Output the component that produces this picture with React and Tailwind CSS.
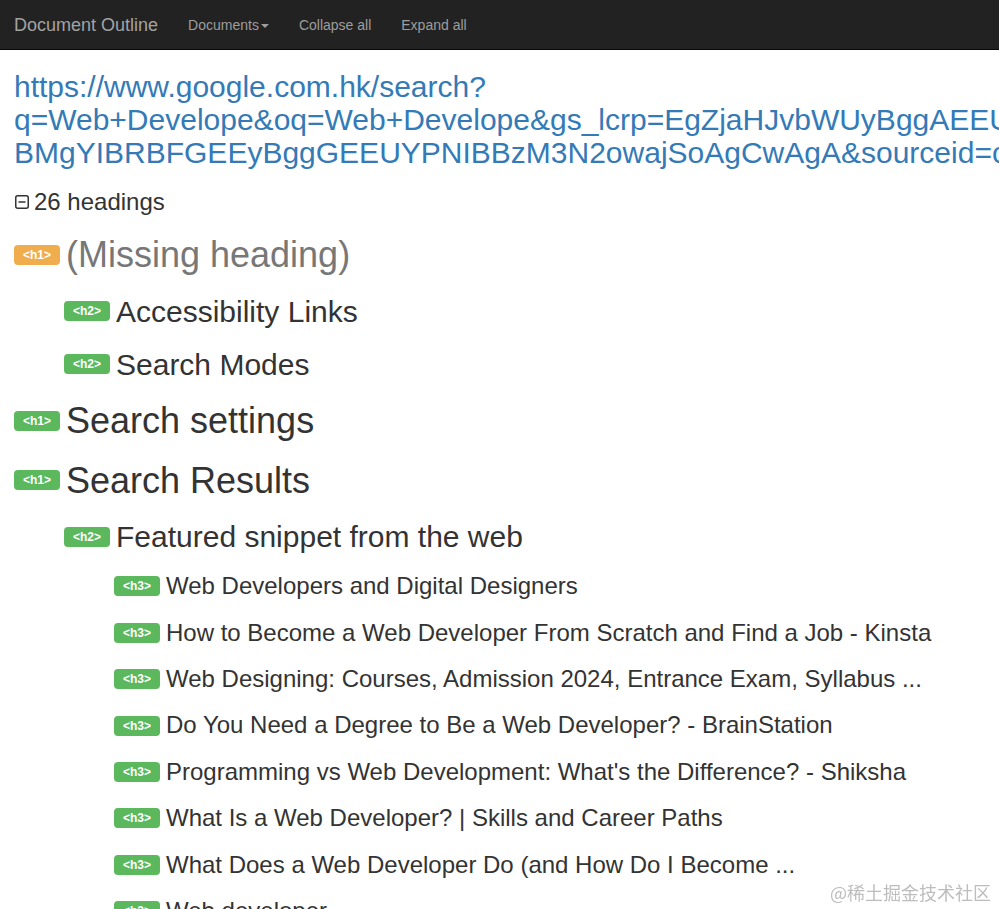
import React from "react";

const tree = [
  {
    level: 1,
    text: "(Missing heading)",
    missing: true,
    children: [
      { level: 2, text: "Accessibility Links" },
      { level: 2, text: "Search Modes" },
    ],
  },
  { level: 1, text: "Search settings" },
  {
    level: 1,
    text: "Search Results",
    children: [
      {
        level: 2,
        text: "Featured snippet from the web",
        children: [
          { level: 3, text: "Web Developers and Digital Designers" },
          { level: 3, text: "How to Become a Web Developer From Scratch and Find a Job - Kinsta" },
          { level: 3, text: "Web Designing: Courses, Admission 2024, Entrance Exam, Syllabus ..." },
          { level: 3, text: "Do You Need a Degree to Be a Web Developer? - BrainStation" },
          { level: 3, text: "Programming vs Web Development: What's the Difference? - Shiksha" },
          { level: 3, text: "What Is a Web Developer? | Skills and Career Paths" },
          { level: 3, text: "What Does a Web Developer Do (and How Do I Become ..." },
          { level: 3, text: "Web developer" },
          { level: 3, text: "Web Developer Job Description" },
        ],
      },
    ],
  },
];

const sizeClass = {
  1: "text-[36px]",
  2: "text-[30px]",
  3: "text-[24px]",
};

function Item({ node }) {
  return (
    <li>
      <div className="flex items-center mt-[20px] mb-[10px]">
        <span
          className={
            "inline-flex h-[20px] w-[46px] items-center justify-center rounded-[4px] text-[12px] font-bold leading-none text-white mr-[6px] shrink-0 " +
            (node.missing ? "bg-[#f0ad4e]" : "bg-[#5cb85c]")
          }
        >
          {"<h" + node.level + ">"}
        </span>
        <span
          className={
            sizeClass[node.level] +
            " leading-[1.1] whitespace-nowrap " +
            (node.missing ? "text-[#777]" : "text-[#333]")
          }
        >
          {node.text}
        </span>
      </div>
      {node.children && (
        <ul className="pl-[50px]">
          {node.children.map((c, i) => (
            <Item key={i} node={c} />
          ))}
        </ul>
      )}
    </li>
  );
}

export default function App() {
  return (
    <div
      className="min-h-screen w-full overflow-hidden bg-white"
      style={{ fontFamily: '"Liberation Sans", Arial, sans-serif' }}
    >
      <nav className="flex h-[50px] items-stretch border-b border-[#080808] bg-[#222]">
        <a className="pl-[14px] pr-[15px] py-[15px] text-[18px] leading-[20px] text-[#a3a3a3]">
          Document Outline
        </a>
        <a className="px-[15px] py-[15px] text-[14px] leading-[20px] text-[#9d9d9d]">
          Documents
          <span className="ml-[2px] inline-block h-0 w-0 align-middle border-t-[4px] border-x-[4px] border-t-[#9d9d9d] border-x-transparent" />
        </a>
        <a className="px-[15px] py-[15px] text-[14px] leading-[20px] text-[#9d9d9d]">
          Collapse all
        </a>
        <a className="px-[15px] py-[15px] text-[14px] leading-[20px] text-[#9d9d9d]">
          Expand all
        </a>
      </nav>

      <div className="pl-[14px] pr-[15px]">
        <div className="mt-[20px] mb-[10px] whitespace-nowrap text-[30px] leading-[1.1] text-[#337ab7]">
          <div>https://www.google.com.hk/search?</div>
          <div>q=Web+Develope&amp;oq=Web+Develope&amp;gs_lcrp=EgZjaHJvbWUyBggAEEUYOTIGCAEQRRhA</div>
          <div>BMgYIBRBFGEEyBggGEEUYPNIBBzM3N2owajSoAgCwAgA&amp;sourceid=chrome&amp;ie=UTF-8</div>
        </div>

        <div className="mt-[20px] mb-[10px] flex items-center text-[24px] leading-[1.1] text-[#333]">
          <svg width="14" height="14" viewBox="0 0 14 14" className="ml-[1px] mr-[5px] shrink-0">
            <rect x="0.75" y="0.75" width="12.5" height="12.5" rx="2" fill="none" stroke="#333" strokeWidth="1.5" />
            <line x1="3.5" y1="7" x2="10.5" y2="7" stroke="#333" strokeWidth="1.5" />
          </svg>
          <span>26 headings</span>
        </div>

        <ul>
          {tree.map((n, i) => (
            <Item key={i} node={n} />
          ))}
        </ul>
      </div>

      <div
        className="fixed right-[8px] bottom-[8px] text-[18px] leading-none text-[#bdbdbd]"
        style={{ fontFamily: '"Noto Sans CJK SC", "Liberation Sans", sans-serif' }}
      >
        @稀土掘金技术社区
      </div>
    </div>
  );
}
